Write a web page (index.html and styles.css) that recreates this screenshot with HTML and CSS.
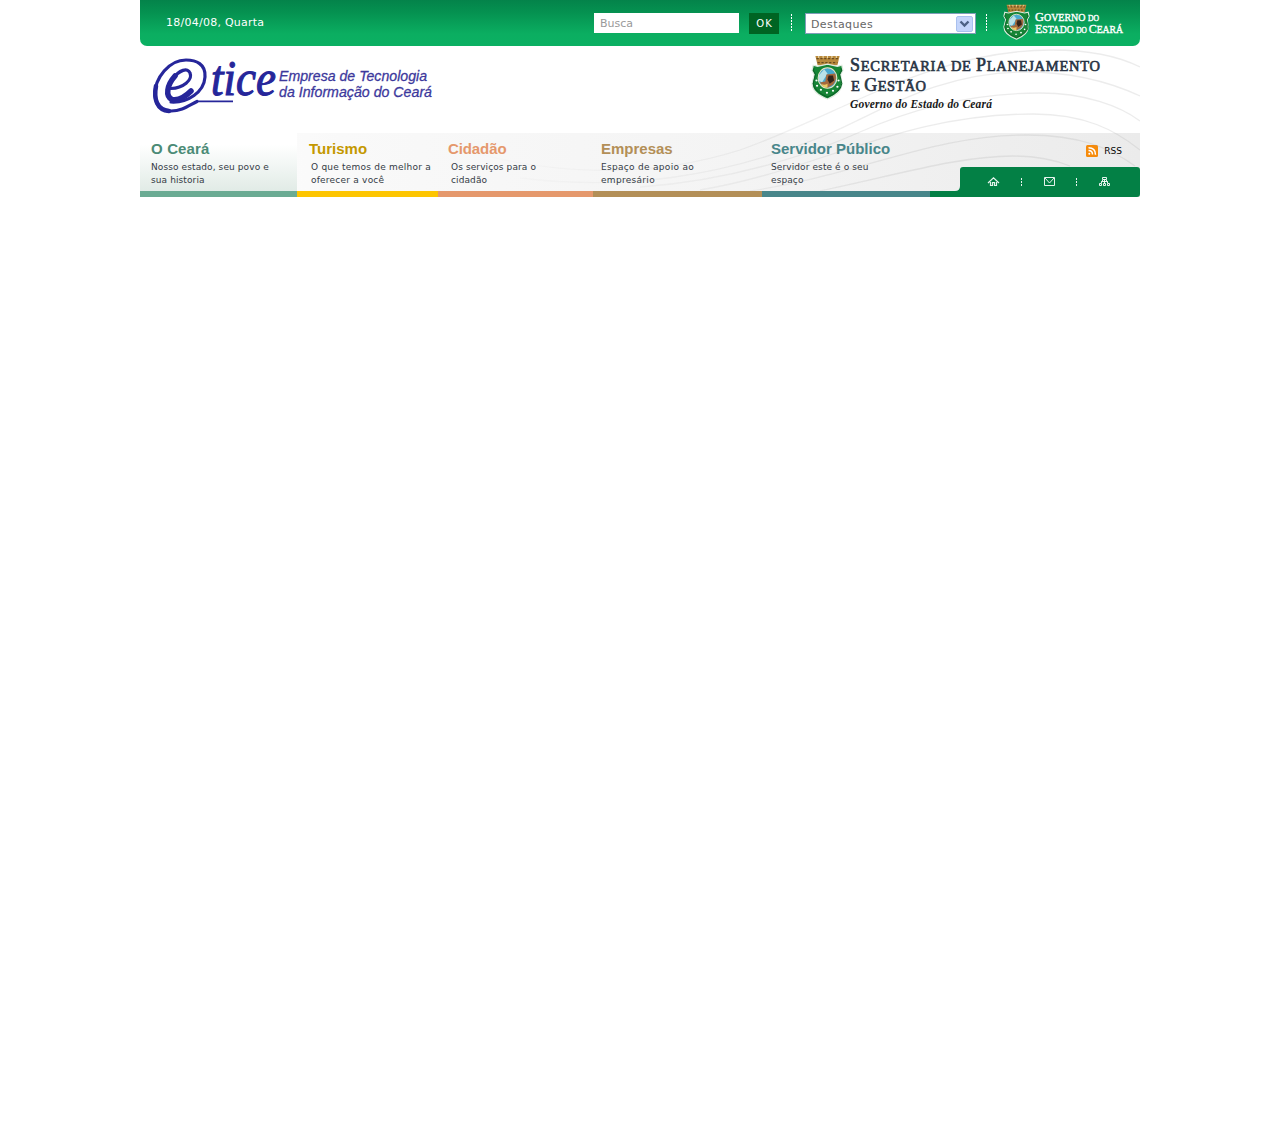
FILE: index.html
```html
<!DOCTYPE html>
<html lang="pt-BR">
<head>
<meta charset="utf-8">
<title>ETICE - Empresa de Tecnologia da Informação do Ceará</title>
<link rel="stylesheet" href="styles.css">
</head>
<body>
<svg width="0" height="0" class="defs" aria-hidden="true">
  <symbol id="crest" viewBox="0 0 30 44" preserveAspectRatio="none">
    <path d="M4 1h22l-2 9H6z" fill="#b98a3c"/>
    <path d="M5 3.500h20M6 7.500h18" stroke="#694a20" stroke-width="1.300" stroke-dasharray="2 1.500"/>
    <path d="M7 1v2M11 1v2M15 1v2M19 1v2M23 1v2" stroke="#ead9ae" stroke-width="1"/>
    <path d="M2 10l4 1 9-2 9 2 4-1 1 5-2 4 1 9q0 9-13 15Q1 37 1 28l2-9-2-4z" fill="#168536" stroke="#dfeadf" stroke-width="1.200"/>
    <path d="M3 13l-1 2 2 4-2 9q1 8 13 13 12-5 13-13l-2-9 2-4-1-2" fill="none" stroke="#0c6528" stroke-width="1"/>
    <ellipse cx="15" cy="22.500" rx="8.500" ry="10" fill="#48a9cf" stroke="#eee5c4"/>
    <path d="M7 20l5-6 3 4-5 9-3-2z" fill="#b9e2e8"/>
    <path d="M14 19l8-1q2 6-2 11l-5 3q-5-2-7-5l5-1z" fill="#a4683c"/>
    <path d="M16 20h4l1 5-4 3-2-4z" fill="#33251b"/>
    <path d="M9 28q3 2 6 0v4q-4 0-6-4z" fill="#edca62"/>
    <g fill="#fff"><circle cx="5" cy="25" r="1"/><circle cx="5.500" cy="30" r="1"/><circle cx="9" cy="34" r="1"/><circle cx="14.500" cy="37" r="1"/><circle cx="20" cy="35" r="1"/><circle cx="24" cy="31" r="1"/><circle cx="25" cy="25" r="1"/></g>
  </symbol>
</svg>
<div class="header">
  <div class="topbar">
    <span class="date">18/04/08, Quarta</span>
    <div class="search">Busca</div>
    <div class="ok">OK</div>
    <i class="dots"></i>
    <div class="select"><span>Destaques</span>
      <svg width="17" height="16" viewBox="0 0 17 16"><rect x=".5" y=".5" width="16" height="15" rx="1.500" fill="#c4d5fb" stroke="#a9c0ee"/><path d="M4.500 5.500l4 4 4-4" fill="none" stroke="#4d6185" stroke-width="2.400"/></svg>
    </div>
    <i class="dots dots-two"></i>
    <svg class="gov" width="130" height="46" viewBox="0 0 130 46">
      <use href="#crest" x="5" y="4" width="27" height="36"/>
      <g class="gov-text">
        <text x="37" y="21" textLength="64" lengthAdjust="spacingAndGlyphs"><tspan font-size="13">G</tspan><tspan font-size="10.500">OVERNO </tspan><tspan font-size="8">DO</tspan></text>
        <text x="37" y="33" textLength="88" lengthAdjust="spacingAndGlyphs"><tspan font-size="13">E</tspan><tspan font-size="10.500">STADO </tspan><tspan font-size="8">DO </tspan><tspan font-size="13">C</tspan><tspan font-size="10.500">EARÁ</tspan></text>
      </g>
    </svg>
  </div>
  <div class="brand">
    <svg width="310" height="87" viewBox="140 46 310 87">
      <g fill="none" stroke="#26269a" stroke-linecap="round">
        <path d="M171 102C188 103 204 92 205 77C206 64 196 60 186 60C169 60 155 78 155 94C155 106 162 111 171 111C182 111 188 106 197 101.500" stroke-width="3.200"/>
        <path d="M156 86C153.500 99 157 110 169 111" stroke-width="4.500"/>
        <path d="M197 101.300H233" stroke-width="1.800" stroke-linecap="butt"/>
        <path d="M171 88.500C183 88 193 80 190 73C188 67 179 70 173 79" stroke-width="3.200"/>
        <path d="M175 76C167 85 165 96 172 99.500C180 101 186 96 191 91" stroke-width="5.500"/>
      </g>
      <text class="etice" x="211" y="95" textLength="65" lengthAdjust="spacingAndGlyphs">tice</text>
      <g class="company">
        <text x="279" y="81" textLength="148" lengthAdjust="spacingAndGlyphs">Empresa de Tecnologia</text>
        <text x="279" y="97" textLength="153" lengthAdjust="spacingAndGlyphs">da Informação do Ceará</text>
      </g>
    </svg>
    <svg class="secretariat" width="340" height="87" viewBox="800 46 340 87">
      <use href="#crest" x="811" y="55" width="33" height="45"/>
      <g class="sec-text">
        <text x="850" y="71" textLength="250"><tspan font-size="18">S</tspan><tspan font-size="14.500">ECRETARIA DE </tspan><tspan font-size="18">P</tspan><tspan font-size="14.500">LANEJAMENTO</tspan></text>
        <text x="851" y="91" textLength="75"><tspan font-size="14.500">E </tspan><tspan font-size="18">G</tspan><tspan font-size="14.500">ESTÃO</tspan></text>
      </g>
      <text class="state" x="850" y="107.500" textLength="142">Governo do Estado do Ceará</text>
    </svg>
  </div>
  <div class="nav">
    <div class="tab ceara"><b>O Ceará</b><p>Nosso estado, seu povo e<br>sua historia</p></div>
    <div class="tab turismo"><b>Turismo</b><p>O que temos de melhor a<br>oferecer a você</p></div>
    <div class="tab cidadao"><b>Cidadão</b><p>Os serviços para o<br>cidadão</p></div>
    <div class="tab empresas"><b>Empresas</b><p>Espaço de apoio ao<br>empresário</p></div>
    <div class="tab servidor"><b>Servidor Público</b><p>Servidor este é o seu<br>espaço</p></div>
    <div class="tools">
      <div class="rss"><svg width="12" height="12" viewBox="0 0 12 12"><rect width="12" height="12" rx="1.500" fill="#f68b0b"/><path d="M2.500 5.500q4 0 4 4M2.500 2.700q7 0 7 7" fill="none" stroke="#fff" stroke-width="1.500"/><circle cx="3.300" cy="8.800" r="1" fill="#fff"/></svg><span>RSS</span></div>
      <svg class="links" width="210" height="30" viewBox="930 167 210 30">
        <path d="M930 191h25q5 0 5-5v-16q0-3 3-3h174q3 0 3 3v24q0 3-3 3H930z" fill="#038045"/>
        <g fill="none" stroke="#fff" stroke-opacity=".9" stroke-width="1.200">
          <path d="M988 183l5.500-5.200 5.500 5.200M990.500 182v3.500h2v-3h2v3h2V182"/>
          <path d="M1044.500 177.500h10v8h-10zM1045 178l4.500 5 4.500-5" stroke-width="1"/>
          <path d="M1102.500 177.500h4v2h-4zM1104.500 179.500v4M1101.500 183v-1.500h6v1.500M1101.500 181.500l2-2M1107.500 181.500l-2-2M1099.500 183.500h2v2h-2zM1103.500 183.500h2v2h-2zM1107.500 183.500h2v2h-2z" stroke-width="1"/>
          <path d="M1021.500 178v8M1076.500 178v8" stroke-width="1" stroke-dasharray="2 1"/>
        </g>
      </svg>
    </div>
  </div>
  <svg class="waves" width="1000" height="191" viewBox="0 0 1000 191">
    <path d="M300 142C380 170 490 185 600 150C700 115 790 50 912 50C950 50 980 57 1000 67"/>
    <path d="M380 178C480 190 580 180 693 132C743 110 800 72 885 72C930 72 970 82 1000 96"/>
    <path d="M500 187C600 180 680 150 720 132C780 105 840 93 900 93C945 93 980 106 1000 121"/>
    <path d="M560 190C680 170 760 114 893 114C945 114 975 130 1000 150"/>
    <path d="M610 191C720 175 790 135 887 135C940 135 970 148 995 166"/>
    <path d="M680 191C760 174 820 156 873 156Q905 156 930 166"/>
  </svg>
</div>
</body>
</html>
```
FILE: styles.css
```css
body { margin: 0; background: #fff; font-family: "DejaVu Sans", sans-serif; }
.defs { display: block; }
.header { width: 1000px; margin: 0 auto; position: relative; }
.topbar {
  height: 46px; box-sizing: border-box; padding-left: 26px; display: flex; align-items: flex-start;
  background: linear-gradient(#04834a 0, #059150 12px, #0bae61 34px, #0bb062 46px);
  border-radius: 0 0 7px 7px; font-size: 11px;
}
.date { width: 428px; padding-top: 16px; line-height: 13px; color: #fff; letter-spacing: .25px; }
.search { width: 139px; height: 20px; line-height: 21px; margin-top: 13px; padding-left: 6px; background: #fff; color: #999; }
.ok { width: 30px; height: 21px; line-height: 22px; margin: 13px 0 0 10px; background: #006423; color: #fff; text-align: center; font-size: 10px; letter-spacing: 1px; text-indent: 1px; }
.dots { width: 1px; height: 17px; margin: 14px 0 0 12px; background: repeating-linear-gradient(#fff 0 2px, transparent 2px 3px); }
.dots-two { margin-left: 10px; }
.select { box-sizing: border-box; width: 171px; height: 21px; margin: 13px 0 0 13px; padding: 0 2px 0 5px; border: 1px solid #7f9db9; background: #fff; color: #666; display: flex; align-items: center; justify-content: space-between; letter-spacing: .4px; }
.select span { padding-top: 1px; }
.gov { margin-left: 11px; }
.gov-text { font-family: "Liberation Serif", serif; fill: #fff; stroke: #fff; stroke-width: .4px; }
.brand { height: 87px; display: flex; justify-content: space-between; }
.brand svg { position: relative; z-index: 1; }
.etice { font: italic 50px "Liberation Serif", serif; fill: #26269a; stroke: #26269a; stroke-width: 1.1px; }
.company { font: italic 15px "Liberation Sans", sans-serif; fill: #3c389c; stroke: #3c389c; stroke-width: .3px; }
.sec-text { font-family: "Liberation Serif", serif; fill: #283444; stroke: #283444; stroke-width: .6px; }
.state { font: italic bold 11.5px "Liberation Serif", serif; fill: #191919; }
.nav { height: 64px; display: flex; background: linear-gradient(90deg, #fff, #f9f9f9 20%, #f4f4f4 60%, #ebebeb); }
.tab { box-sizing: border-box; height: 64px; padding: 8px 0 0 11px; border-bottom: 6px solid; white-space: nowrap; }
.tab b { display: block; font: bold 15px/16px "Liberation Sans", sans-serif; }
.tab p { margin: 4px 0 0; font-size: 9px; line-height: 13px; color: #343b45; letter-spacing: .1px; }
.ceara { width: 157px; border-color: #6aab93; background: linear-gradient(#fff 20%, #e1ebe6); }
.ceara b { color: #4b8b76; letter-spacing: .15px; }
.turismo { width: 141px; border-color: #fdc500; padding-left: 14px; }
.turismo b { color: #c49800; margin-left: -2px; }
.turismo p { letter-spacing: .22px; }
.cidadao { width: 155px; border-color: #e5986c; padding-left: 13px; }
.cidadao b { color: #e5986c; margin-left: -3px; letter-spacing: -.1px; }
.empresas { width: 169px; border-color: #b38f57; padding-left: 8px; }
.empresas b { color: #b38f57; }
.empresas p { letter-spacing: .3px; }
.servidor { width: 168px; border-color: #48868a; padding-left: 9px; }
.servidor b { color: #48868a; }
.tools { width: 210px; display: flex; flex-direction: column; }
.rss { height: 34px; box-sizing: border-box; padding: 12px 18px 0 0; display: flex; justify-content: flex-end; gap: 6px; font-size: 9px; line-height: 12px; color: #000; }
.links { position: relative; z-index: 1; }
.waves {
  position: absolute; left: 0; top: 0; pointer-events: none; clip-path: inset(47px 0 0 0);
  fill: none; stroke: #a8a8a8; stroke-opacity: .22; stroke-width: 1.3px;
  mask-image: linear-gradient(90deg, transparent 30%, rgba(0,0,0,.4) 50%, #000 75%);
}
.tab b, .tab p { position: relative; z-index: 1; }
```
